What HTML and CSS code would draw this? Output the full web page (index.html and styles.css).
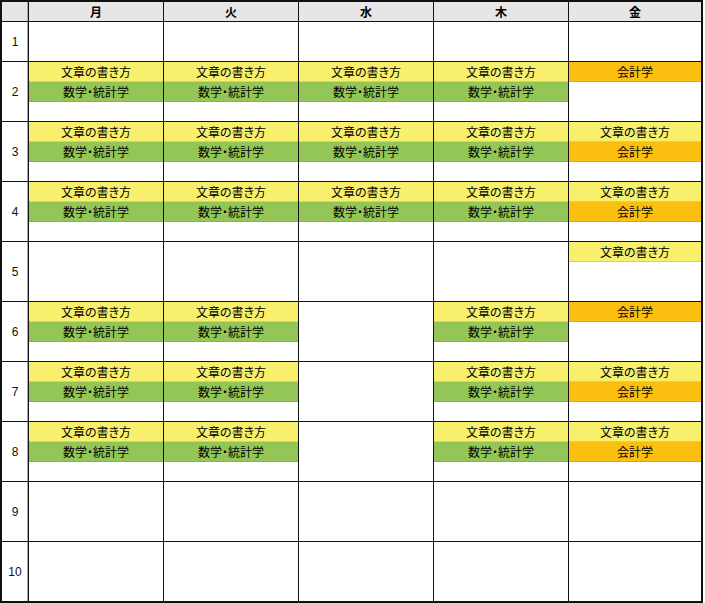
FILE: index.html
```html
<!DOCTYPE html>
<html lang="ja">
<head>
<meta charset="utf-8">
<link rel="stylesheet" href="styles.css">
</head>
<body>
<div class="grid">
  <div class="hd num"></div><div class="hd">月</div><div class="hd">火</div><div class="hd">水</div><div class="hd">木</div><div class="hd">金</div>

  <div class="num r1">1</div><div class="cell"></div><div class="cell"></div><div class="cell"></div><div class="cell"></div><div class="cell"></div>

  <div class="num">2</div>
  <div class="cell"><div class="y">文章の書き方</div><div class="g">数学・統計学</div></div>
  <div class="cell"><div class="y">文章の書き方</div><div class="g">数学・統計学</div></div>
  <div class="cell"><div class="y">文章の書き方</div><div class="g">数学・統計学</div></div>
  <div class="cell"><div class="y">文章の書き方</div><div class="g">数学・統計学</div></div>
  <div class="cell"><div class="o">会計学</div></div>

  <div class="num">3</div>
  <div class="cell"><div class="y">文章の書き方</div><div class="g">数学・統計学</div></div>
  <div class="cell"><div class="y">文章の書き方</div><div class="g">数学・統計学</div></div>
  <div class="cell"><div class="y">文章の書き方</div><div class="g">数学・統計学</div></div>
  <div class="cell"><div class="y">文章の書き方</div><div class="g">数学・統計学</div></div>
  <div class="cell"><div class="y">文章の書き方</div><div class="o">会計学</div></div>

  <div class="num">4</div>
  <div class="cell"><div class="y">文章の書き方</div><div class="g">数学・統計学</div></div>
  <div class="cell"><div class="y">文章の書き方</div><div class="g">数学・統計学</div></div>
  <div class="cell"><div class="y">文章の書き方</div><div class="g">数学・統計学</div></div>
  <div class="cell"><div class="y">文章の書き方</div><div class="g">数学・統計学</div></div>
  <div class="cell"><div class="y">文章の書き方</div><div class="o">会計学</div></div>

  <div class="num">5</div>
  <div class="cell"></div><div class="cell"></div><div class="cell"></div><div class="cell"></div>
  <div class="cell"><div class="y">文章の書き方</div></div>

  <div class="num">6</div>
  <div class="cell"><div class="y">文章の書き方</div><div class="g">数学・統計学</div></div>
  <div class="cell"><div class="y">文章の書き方</div><div class="g">数学・統計学</div></div>
  <div class="cell"></div>
  <div class="cell"><div class="y">文章の書き方</div><div class="g">数学・統計学</div></div>
  <div class="cell"><div class="o">会計学</div></div>

  <div class="num">7</div>
  <div class="cell"><div class="y">文章の書き方</div><div class="g">数学・統計学</div></div>
  <div class="cell"><div class="y">文章の書き方</div><div class="g">数学・統計学</div></div>
  <div class="cell"></div>
  <div class="cell"><div class="y">文章の書き方</div><div class="g">数学・統計学</div></div>
  <div class="cell"><div class="y">文章の書き方</div><div class="o">会計学</div></div>

  <div class="num">8</div>
  <div class="cell"><div class="y">文章の書き方</div><div class="g">数学・統計学</div></div>
  <div class="cell"><div class="y">文章の書き方</div><div class="g">数学・統計学</div></div>
  <div class="cell"></div>
  <div class="cell"><div class="y">文章の書き方</div><div class="g">数学・統計学</div></div>
  <div class="cell"><div class="y">文章の書き方</div><div class="o">会計学</div></div>

  <div class="num">9</div><div class="cell"></div><div class="cell"></div><div class="cell"></div><div class="cell"></div><div class="cell"></div>

  <div class="num">10</div><div class="cell"></div><div class="cell"></div><div class="cell"></div><div class="cell"></div><div class="cell"></div>
</div>
</body>
</html>
```
FILE: styles.css
```css
html, body {
  margin: 0;
  padding: 0;
  background: #ffffff;
}
.grid {
  display: grid;
  width: 699px;
  grid-template-columns: 26px 134px 134px 134px 134px 132px;
  grid-template-rows: 19px 39px repeat(9, 59px);
  gap: 1px;
  background: #111111;
  border: 2px solid #111111;
  font-family: "Noto Sans CJK JP", "Noto Sans", sans-serif;
  font-size: 12px;
  font-feature-settings: "palt";
  color: #000000;
}
.grid > div {
  background: #ffffff;
}
.grid > .hd {
  background: #e6e6e6;
  text-align: center;
  font-size: 12px;
  font-weight: bold;
  line-height: 19px;
}
.grid > .num {
  display: flex;
  align-items: center;
  justify-content: center;
  box-shadow: inset -1px 0 0 #a8a8a8;
  font-family: "Liberation Sans", sans-serif;
  font-size: 12px;
  color: #111111;
}
.grid > .hd.num {
  background: #e6e6e6;
}
.cell {
  display: flex;
  flex-direction: column;
}
.y, .g, .o {
  height: 19px;
  line-height: 19px;
  text-align: center;
  border-bottom: 1px solid rgba(0, 0, 0, 0.12);
}
.y { background: #f8ef6c; }
.g { background: #93c656; border-bottom-color: #9a9a9a; }
.o { background: #fabf10; }
```
